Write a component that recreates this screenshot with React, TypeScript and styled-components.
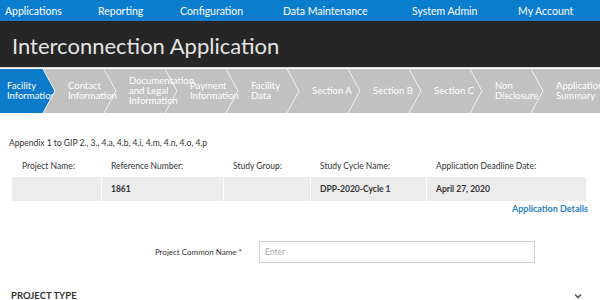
import React from 'react';
import styled, { createGlobalStyle } from 'styled-components';

const GlobalStyle = createGlobalStyle`
  html, body {
    margin: 0;
    padding: 0;
    background: #fff;
    font-family: Lato, "Open Sans", Arial, sans-serif;
    overflow: hidden;
  }
`;

const navItems = ['Applications', 'Reporting', 'Configuration', 'Data Maintenance', 'System Admin', 'My Account'];
const navWidths = [93, 82, 103, 129, 106, 80];

const steps = [
  'Facility Information',
  'Contact Information',
  'Documentation and Legal Information',
  'Payment Information',
  'Facility Data',
  'Section A',
  'Section B',
  'Section C',
  'Non Disclosure',
  'Application Summary',
];

const columns = [
  { label: 'Project Name:', value: '', width: 90 },
  { label: 'Reference Number:', value: '1861', width: 122 },
  { label: 'Study Group:', value: '', width: 87 },
  { label: 'Study Cycle Name:', value: 'DPP-2020-Cycle 1', width: 116 },
  { label: 'Application Deadline Date:', value: 'April 27, 2020', width: 160 },
];

const App = () => {
  return (
    <Page>
      <GlobalStyle />
      <NavBar>
        {navItems.map((item, idx) => (
          <NavItem key={item} $width={navWidths[idx]}>{item}</NavItem>
        ))}
      </NavBar>
      <TitleBar>
        <Title>Interconnection Application</Title>
      </TitleBar>
      <StepsBar>
        {steps.map((step, idx) => (
          <Step key={step} $active={idx === 0}>
            <StepLabel>{step}</StepLabel>
            {idx > 0 && (
              <Chevron viewBox="0 0 14 44" preserveAspectRatio="none">
                <polyline points="1,0 13,22 1,44" fill="none" stroke="#f2f2f2" strokeWidth="1" />
              </Chevron>
            )}
          </Step>
        ))}
      </StepsBar>
      <Content>
        <Appendix>Appendix 1 to GIP 2., 3., 4.a, 4.b, 4.i, 4.m, 4.n, 4.o, 4.p</Appendix>
        <InfoTable>
          <Row>
            {columns.map((c, idx) => (
              <HeadCell key={c.label} $width={c.width} $first={idx === 0}>{c.label}</HeadCell>
            ))}
          </Row>
          <Row>
            {columns.map((c, idx) => (
              <ValueCell key={c.label} $width={c.width} $first={idx === 0}>{c.value}</ValueCell>
            ))}
          </Row>
        </InfoTable>
        <DetailsLink>Application Details</DetailsLink>
        <FormRow>
          <FieldLabel>Project Common Name *</FieldLabel>
          <TextInput placeholder="Enter" />
        </FormRow>
        <SectionHeader>
          <SectionTitle>PROJECT TYPE</SectionTitle>
          <svg width="8" height="6" viewBox="0 0 8 6">
            <polyline points="1,1.5 4,4.5 7,1.5" fill="none" stroke="#555" strokeWidth="1.6" />
          </svg>
        </SectionHeader>
      </Content>
    </Page>
  );
};

export default App;

const Page = styled.div`
  width: 600px;
  height: 300px;
  overflow: hidden;
`;

const NavBar = styled.div`
  display: flex;
  align-items: center;
  height: 21px;
  background: #0b7dcf;
  padding-left: 5px;
`;

const NavItem = styled.div<{ $width: number }>`
  width: ${(p) => p.$width}px;
  flex-shrink: 0;
  color: #fff;
  font-size: 10.5px;
  white-space: nowrap;
`;

const TitleBar = styled.div`
  height: 47px;
  background: #262626;
  display: flex;
  align-items: center;
  padding-left: 12px;
  border-bottom: 1px solid #d8d8d8;
  box-sizing: border-box;
`;

const Title = styled.h1`
  margin: 0;
  font-size: 22px;
  font-weight: 400;
  color: #e4e4e4;
  padding-top: 2px;
`;

const StepsBar = styled.div`
  display: flex;
  height: 44px;
  margin-top: 1px;
  background: #c1c1c1;
  overflow: hidden;
`;

const Step = styled.div<{ $active?: boolean }>`
  position: relative;
  width: 61px;
  flex-shrink: 0;
  height: 100%;
  display: flex;
  align-items: center;
  padding-left: 7px;
  box-sizing: border-box;
  ${(p) =>
    p.$active &&
    `
    background: #0b7acb;
    width: 55px;
    margin-right: 6px;
    clip-path: polygon(0 0, 43px 0, 55px 50%, 43px 100%, 0 100%);
  `}
`;

const StepLabel = styled.span`
  color: #fff;
  font-size: 9.5px;
  line-height: 10px;
  width: 44px;
  white-space: normal;
  overflow: visible;
`;

const Chevron = styled.svg`
  position: absolute;
  left: -19px;
  top: 0;
  width: 14px;
  height: 44px;
`;

const Content = styled.div`
  padding: 0 12px;
`;

const Appendix = styled.div`
  font-size: 8.5px;
  color: #333;
  margin-top: 25px;
  margin-left: -3px;
`;

const InfoTable = styled.div`
  margin-top: 12px;
  display: flex;
  flex-direction: column;
`;

const Row = styled.div`
  display: flex;
`;

const HeadCell = styled.div<{ $width: number; $first?: boolean }>`
  width: ${(p) => p.$width}px;
  box-sizing: border-box;
  padding-left: ${(p) => (p.$first ? 10 : 9)}px;
  height: 17px;
  line-height: 12px;
  font-size: 8.5px;
  color: #333;
`;

const ValueCell = styled.div<{ $width: number; $first?: boolean }>`
  width: ${(p) => p.$width}px;
  box-sizing: border-box;
  height: 24px;
  line-height: 24px;
  padding-left: ${(p) => (p.$first ? 10 : 9)}px;
  background: #ececec;
  border-right: 1px solid #fff;
  font-size: 8.5px;
  font-weight: 700;
  color: #333;
`;

const DetailsLink = styled.div`
  text-align: right;
  font-size: 9px;
  font-weight: 700;
  color: #2a7fc6;
  margin-top: 2px;
`;

const FormRow = styled.div`
  display: flex;
  align-items: center;
  margin-top: 27px;
  padding-left: 138px;
`;

const FieldLabel = styled.label`
  font-size: 8px;
  color: #333;
  width: 109px;
  box-sizing: border-box;
  padding-right: 17px;
  text-align: right;
`;

const TextInput = styled.input`
  width: 276px;
  height: 22px;
  box-sizing: border-box;
  border: 1px solid #cfcfcf;
  padding: 0 5px;
  font-family: Lato, Arial, sans-serif;
  font-size: 8.5px;
  outline: none;
  &::placeholder {
    color: #aaa;
  }
`;

const SectionHeader = styled.div`
  display: flex;
  align-items: center;
  justify-content: space-between;
  margin-top: 27px;
  margin-left: -1px;
  padding-right: 6px;
`;

const SectionTitle = styled.div`
  font-size: 9.5px;
  font-weight: 700;
  color: #333;
`;
